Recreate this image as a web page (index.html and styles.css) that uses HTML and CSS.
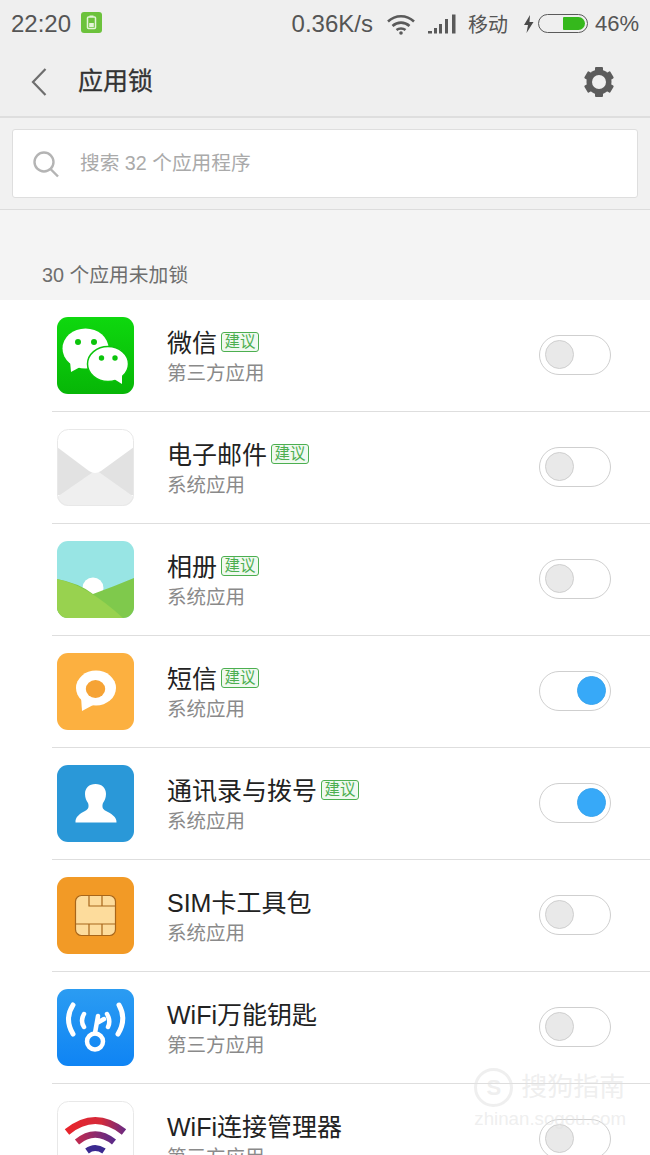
FILE: index.html
```html
<!DOCTYPE html>
<html lang="zh">
<head>
    <meta charset="UTF-8">
    <title>应用锁</title>
    <link rel="stylesheet" href="styles.css">
</head>
<body>

<div class="status-bar">
    <div class="status-left">
        <span class="clock">22:20</span>
        <svg class="status-app" width="21" height="21" viewBox="0 0 21 21">
            <rect width="21" height="21" rx="3" fill="#6cc23c"/>
            <rect x="6.5" y="5" width="8" height="11.5" rx="1" fill="none" stroke="#e4f5d8" stroke-width="1.5"/>
            <rect x="8.5" y="3.5" width="4" height="1.5" fill="#e4f5d8"/>
            <rect x="8.2" y="11" width="4.6" height="4" fill="#e4f5d8"/>
        </svg>
    </div>
    <div class="status-right">
        <span class="speed">0.36K/s</span>
        <svg class="wifi" width="30" height="22" viewBox="0 0 30 22" fill="none" stroke="#5a5a5a" stroke-width="2.6">
            <path d="M2 8.5C9.5 1.5 20.5 1.5 28 8.5"/>
            <path d="M6.5 13C11.5 8.5 18.5 8.5 23.5 13"/>
            <path d="M10.5 17C13 15 17 15 19.5 17"/>
            <circle cx="15" cy="20" r="1.8" fill="#5a5a5a" stroke="none"/>
        </svg>
        <svg class="signal" width="29" height="20" viewBox="0 0 29 20" fill="#5a5a5a">
            <rect x="0" y="17" width="4" height="2.5"/>
            <rect x="6" y="14" width="3" height="5.5"/>
            <rect x="11" y="10" width="3" height="9.5"/>
            <rect x="17" y="5" width="3" height="14.5"/>
            <rect x="24" y="0.5" width="3.5" height="19"/>
        </svg>
        <span class="carrier">移动</span>
        <svg class="bolt" width="11" height="18" viewBox="0 0 11 18"><path d="M7 0L1 10H5L3.5 18L10.5 7H6.5Z" fill="#4a4a4a"/></svg>
        <div class="battery"><div class="battery-fill"></div></div>
        <span class="percent">46%</span>
    </div>
</div>

<div class="title-bar">
    <svg class="back" width="18" height="30" viewBox="0 0 18 30"><path d="M15.5 2L3 15L15.5 28" fill="none" stroke="#6e6e6e" stroke-width="2.2"/></svg>
    <h1>应用锁</h1>
    <svg class="gear" width="32" height="32" viewBox="0 0 32 32" fill="#5c5c5c">
        <circle cx="16" cy="16" r="12.5"/>
        <rect x="12" y="1" width="8" height="7" rx="1"/>
        <rect x="12" y="1" width="8" height="7" rx="1" transform="rotate(60 16 16)"/>
        <rect x="12" y="1" width="8" height="7" rx="1" transform="rotate(120 16 16)"/>
        <rect x="12" y="1" width="8" height="7" rx="1" transform="rotate(180 16 16)"/>
        <rect x="12" y="1" width="8" height="7" rx="1" transform="rotate(240 16 16)"/>
        <rect x="12" y="1" width="8" height="7" rx="1" transform="rotate(300 16 16)"/>
        <circle cx="16" cy="16" r="7" fill="#efefef"/>
    </svg>
</div>

<div class="search-section">
    <div class="search-box">
        <svg width="28" height="28" viewBox="0 0 28 28" fill="none" stroke="#b4b4b4" stroke-width="2.4">
            <circle cx="12" cy="12" r="9.5"/>
            <path d="M18.5 19L26 26.5"/>
        </svg>
        <span>搜索 32 个应用程序</span>
    </div>
</div>

<div class="section-label">30 个应用未加锁</div>

<div class="app-list">

    <div class="app-row">
        <svg class="app-icon" viewBox="0 0 77 77">
            <defs><linearGradient id="wechat-bg" x1="0" y1="0" x2="0" y2="1"><stop offset="0" stop-color="#0ed80e"/><stop offset="1" stop-color="#07b607"/></linearGradient></defs>
            <rect width="77" height="77" rx="11" fill="url(#wechat-bg)"/>
            <ellipse cx="28.5" cy="31.5" rx="23" ry="20" fill="#fff"/>
            <path d="M13 44L14 55L25 49Z" fill="#fff"/>
            <ellipse cx="51" cy="47" rx="20.5" ry="17.5" fill="#fff" stroke="#0bc40b" stroke-width="1.5"/>
            <path d="M57 62L65 67L65 56Z" fill="#fff"/>
            <circle cx="21" cy="25" r="3" fill="#0bc40b"/><circle cx="37" cy="25" r="3" fill="#0bc40b"/>
            <circle cx="44.5" cy="41" r="2.7" fill="#0bc40b"/><circle cx="58" cy="41" r="2.7" fill="#0bc40b"/>
        </svg>
        <div class="app-text">
            <div class="app-name">微信<span class="tag">建议</span></div>
            <div class="app-type">第三方应用</div>
        </div>
        <div class="switch"><div class="knob"></div></div>
    </div>

    <div class="app-row">
        <svg class="app-icon" viewBox="0 0 77 77">
            <defs><clipPath id="mail-clip"><rect width="77" height="77" rx="11"/></clipPath></defs>
            <g clip-path="url(#mail-clip)">
                <rect width="77" height="77" fill="#fff"/>
                <path d="M0 17L38 44L77 17V66L0 66Z" fill="#e2e2e2"/>
                <path d="M0 68L39 41L77 68V77H0Z" fill="#efefef"/>
                <path d="M0 0H77V18L44 42Q38 46 32 42L0 18Z" fill="#fff"/>
            </g>
            <rect x="0.5" y="0.5" width="76" height="76" rx="11" fill="none" stroke="#e8e8e8"/>
        </svg>
        <div class="app-text">
            <div class="app-name">电子邮件<span class="tag">建议</span></div>
            <div class="app-type">系统应用</div>
        </div>
        <div class="switch"><div class="knob"></div></div>
    </div>

    <div class="app-row">
        <svg class="app-icon" viewBox="0 0 77 77">
            <defs><clipPath id="album-clip"><rect width="77" height="77" rx="11"/></clipPath></defs>
            <g clip-path="url(#album-clip)">
                <rect width="77" height="77" fill="#98e5e4"/>
                <circle cx="36" cy="47" r="10.5" fill="#fff"/>
                <path d="M0 38Q22 42 36 53Q58 45 77 37V77H0Z" fill="#7fc94c"/>
                <path d="M0 38Q30 44 66 77H0Z" fill="#98d24f"/>
            </g>
        </svg>
        <div class="app-text">
            <div class="app-name">相册<span class="tag">建议</span></div>
            <div class="app-type">系统应用</div>
        </div>
        <div class="switch"><div class="knob"></div></div>
    </div>

    <div class="app-row">
        <svg class="app-icon" viewBox="0 0 77 77">
            <rect width="77" height="77" rx="11" fill="#fcb040"/>
            <ellipse cx="39" cy="35" rx="20" ry="17.5" fill="#fff"/>
            <path d="M24 44L25 58L38 51Z" fill="#fff"/>
            <ellipse cx="38.5" cy="36" rx="9.7" ry="9" fill="#f6a335"/>
        </svg>
        <div class="app-text">
            <div class="app-name">短信<span class="tag">建议</span></div>
            <div class="app-type">系统应用</div>
        </div>
        <div class="switch on"><div class="knob"></div></div>
    </div>

    <div class="app-row">
        <svg class="app-icon" viewBox="0 0 77 77">
            <rect width="77" height="77" rx="11" fill="#2a98d8"/>
            <path d="M38.5 19C45 19 49 23 49 29C49 33 47.5 36 46 38C45 41 45 44 49 46C54 48.5 60 52 59.5 57.5H18.5C18 52 23 48.5 28 46C32 44 32 41 31 38C29.5 36 28 33 28 29C28 23 32 19 38.5 19Z" fill="#fff"/>
        </svg>
        <div class="app-text">
            <div class="app-name">通讯录与拨号<span class="tag">建议</span></div>
            <div class="app-type">系统应用</div>
        </div>
        <div class="switch on"><div class="knob"></div></div>
    </div>

    <div class="app-row">
        <svg class="app-icon" viewBox="0 0 77 77">
            <rect width="77" height="77" rx="11" fill="#f29a26"/>
            <rect x="18.5" y="18.5" width="40" height="40" rx="6" fill="#fddc9c" stroke="#a8661a" stroke-width="1.2"/>
            <path d="M32 19V29H58M45 19V29M18.5 47H58.5M32 47V58M45 47V58" fill="none" stroke="#a8661a" stroke-width="1.2"/>
        </svg>
        <div class="app-text">
            <div class="app-name">SIM卡工具包</div>
            <div class="app-type">系统应用</div>
        </div>
        <div class="switch"><div class="knob"></div></div>
    </div>

    <div class="app-row">
        <svg class="app-icon" viewBox="0 0 77 77">
            <defs><linearGradient id="key-bg" x1="0" y1="0" x2="0" y2="1"><stop offset="0" stop-color="#2b9cf2"/><stop offset="1" stop-color="#0f84f4"/></linearGradient></defs>
            <rect width="77" height="77" rx="11" fill="url(#key-bg)"/>
            <g fill="none" stroke="#fff" stroke-linecap="round">
                <path d="M16 16Q7 30 16 45" stroke-width="5"/>
                <path d="M27 25Q23 32 27 38" stroke-width="4.5"/>
                <path d="M62 16Q70 30 61 45" stroke-width="5"/>
                <path d="M50 25Q54 32 51 38" stroke-width="4.5"/>
                <path d="M38 44L41 27M40 34L47 30" stroke-width="4.5"/>
                <circle cx="38" cy="52.5" r="8" stroke-width="4.5"/>
            </g>
        </svg>
        <div class="app-text">
            <div class="app-name">WiFi万能钥匙</div>
            <div class="app-type">第三方应用</div>
        </div>
        <div class="switch"><div class="knob"></div></div>
    </div>

    <div class="app-row">
        <svg class="app-icon" viewBox="0 0 77 77">
            <defs>
                <linearGradient id="wifi-arc" gradientUnits="userSpaceOnUse" x1="10" y1="0" x2="67" y2="0"><stop offset="0" stop-color="#e8242c"/><stop offset="0.6" stop-color="#d42a3a"/><stop offset="1" stop-color="#6e2a80"/></linearGradient>
                <linearGradient id="wifi-arc-mid" gradientUnits="userSpaceOnUse" x1="20" y1="0" x2="57" y2="0"><stop offset="0" stop-color="#c02a50"/><stop offset="1" stop-color="#5a2a88"/></linearGradient>
            </defs>
            <rect x="0.5" y="0.5" width="76" height="76" rx="11" fill="#fff" stroke="#e8e8e8"/>
            <g fill="none">
                <path d="M10 31Q38 8 67 31" stroke="url(#wifi-arc)" stroke-width="7"/>
                <path d="M20 41Q38 26 57 41" stroke="url(#wifi-arc-mid)" stroke-width="6.5"/>
                <path d="M30 50Q38 44 47 50" stroke="#3b2a90" stroke-width="6"/>
            </g>
            <circle cx="38.5" cy="58" r="4" fill="#2a2a8a"/>
        </svg>
        <div class="app-text">
            <div class="app-name">WiFi连接管理器</div>
            <div class="app-type">第三方应用</div>
        </div>
        <div class="switch"><div class="knob"></div></div>
    </div>

</div>

<div class="watermark">
    <div class="watermark-top"><span class="watermark-logo">S</span>搜狗指南</div>
    <div class="watermark-url">zhinan.sogou.com</div>
</div>

</body>
</html>
```

FILE: styles.css
```css
html, body {
    height: 100%;
    overflow: hidden;
}
body {
    position: relative;
    margin: 0;
    background-color: #fff;
    font-family: "Liberation Sans", "Noto Sans CJK SC", sans-serif;
    color: #1c1c1c;
}
.status-bar {
    display: flex;
    justify-content: space-between;
    align-items: center;
    height: 47px;
    padding: 0 11px;
    background-color: #efefef;
    color: #555;
    font-size: 22px;
}
.status-left, .status-right {
    display: flex;
    align-items: center;
}
.clock, .speed {
    font-size: 24px;
}
.status-app {
    margin-left: 10px;
    margin-top: -2px;
}
.speed {
    margin-right: 13px;
}
.signal {
    margin-left: 12px;
    margin-right: 11px;
}
.carrier {
    font-size: 20px;
    margin-right: 15px;
}
.bolt {
    margin-right: 4px;
}
.battery {
    display: flex;
    justify-content: flex-end;
    box-sizing: border-box;
    width: 50px;
    height: 19px;
    padding: 2px;
    border: 1.5px solid #5a5a5a;
    border-radius: 10px;
    margin-right: 7px;
}
.battery-fill {
    width: 22px;
    background-color: #35b81c;
    border-radius: 1px 7px 7px 1px;
}
.title-bar {
    display: flex;
    align-items: center;
    box-sizing: border-box;
    height: 71px;
    padding: 0 35px 0 30px;
    background-color: #efefef;
    border-bottom: 2px solid #dedede;
}
.title-bar h1 {
    flex: 1;
    margin: 0 0 5px 30px;
    font-size: 25px;
    font-weight: 400;
    color: #333;
    -webkit-text-stroke: 0.3px #333;
}
.search-section {
    box-sizing: border-box;
    height: 92px;
    padding: 11px 12px;
    background-color: #f1f1f1;
    border-bottom: 1px solid #dcdcdc;
}
.search-box {
    display: flex;
    align-items: center;
    box-sizing: border-box;
    height: 69px;
    padding-left: 19px;
    background-color: #fff;
    border: 1px solid #dedede;
    border-radius: 3px;
    color: #aaa;
    font-size: 19.7px;
}
.search-box svg {
    margin-right: 20px;
}
.search-box span {
    margin-bottom: 4px;
}
.section-label {
    box-sizing: border-box;
    height: 90px;
    padding: 52px 0 0 42px;
    background-color: #f4f4f4;
    color: #6e6e6e;
    font-size: 19.8px;
    line-height: 26px;
}
.app-list {
    padding-left: 52px;
}
.app-row {
    display: flex;
    align-items: center;
    box-sizing: border-box;
    height: 112px;
    padding: 0 39px 0 5px;
    border-bottom: 1px solid #dedede;
}
.app-icon {
    width: 77px;
    height: 77px;
    flex-shrink: 0;
}
.app-text {
    flex: 1;
    margin-left: 33px;
}
.app-name {
    display: flex;
    align-items: center;
    margin: 2px 0 1px;
    font-size: 25px;
    line-height: 32px;
    color: #222;
}
.app-type {
    font-size: 19.5px;
    line-height: 26px;
    color: #8a8a8a;
}
.tag {
    box-sizing: border-box;
    width: 38px;
    height: 20px;
    margin-left: 4px;
    margin-top: -3px;
    border: 1.5px solid #4caf50;
    border-radius: 3px;
    background-color: #f0f9f0;
    color: #4caf50;
    font-size: 15.5px;
    line-height: 17px;
    text-align: center;
    white-space: nowrap;
}
.switch {
    display: flex;
    align-items: center;
    box-sizing: border-box;
    width: 72px;
    height: 40px;
    margin-bottom: 2px;
    padding: 0 5px;
    border: 1px solid #cfcfcf;
    border-radius: 20px;
    background-color: #fff;
    flex-shrink: 0;
}
.switch.on {
    justify-content: flex-end;
    padding-right: 4px;
}
.knob {
    box-sizing: border-box;
    width: 29px;
    height: 29px;
    border: 1px solid #cfcfcf;
    border-radius: 50%;
    background-color: #e9e9e9;
}
.switch.on .knob {
    border-color: #3aa5ee;
    background-color: #37a9f8;
}
.watermark {
    position: absolute;
    right: 24px;
    bottom: 24px;
    color: rgba(225, 225, 225, 0.55);
    text-align: center;
}
.watermark-top {
    display: flex;
    align-items: center;
    font-size: 26px;
    line-height: 40px;
}
.watermark-logo {
    box-sizing: border-box;
    width: 39px;
    height: 39px;
    margin-right: 8px;
    border: 3px solid rgba(225, 225, 225, 0.55);
    border-radius: 50%;
    font-size: 22px;
    line-height: 33px;
    font-weight: 700;
}
.watermark-url {
    font-size: 18.7px;
    line-height: 24px;
}
```
